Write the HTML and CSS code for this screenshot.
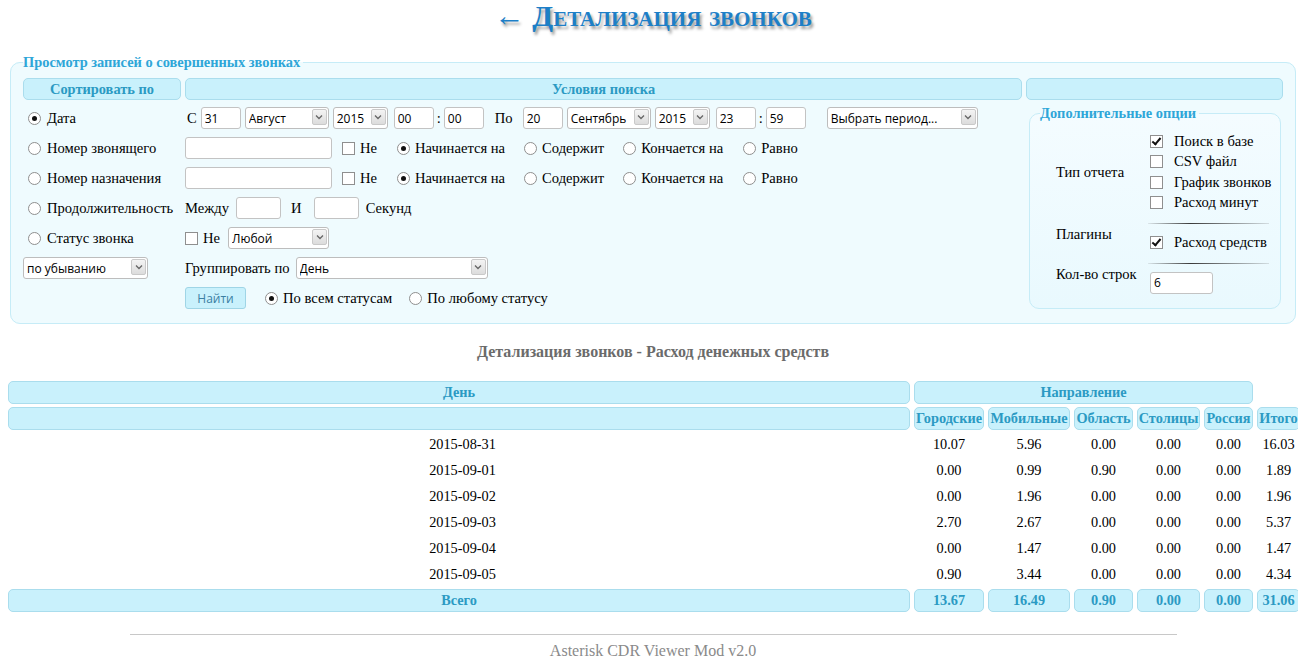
FILE: index.html
```html
<!DOCTYPE html>
<html lang="ru">
<head>
<meta charset="utf-8">
<title>Детализация звонков</title>
<link rel="stylesheet" href="styles.css">
</head>
<body>
<h1 class="title"><span class="back">&larr;</span> Детализация звонков</h1>

<fieldset class="search">
  <legend>Просмотр записей о совершенных звонках</legend>
  <div class="form-grid">
    <div class="hcell">Сортировать по</div>
    <div class="hcell">Условия поиска</div>
    <div class="hcell"></div>

    <!-- row 1 -->
    <div class="c1"><label class="opt"><input type="radio" name="sort" checked><span>Дата</span></label></div>
    <div class="c2">
      <span class="txt ml2">С</span>
      <input class="inp w40" type="text" value="31">
      <span class="sel w84"><select><option>Август</option></select><span class="arr"><svg viewBox="0 0 8 6" width="8" height="6"><path d="M1 1.5 L4 4.5 L7 1.5" fill="none" stroke="#666" stroke-width="1.3"/></svg></span></span>
      <span class="sel w55"><select><option>2015</option></select><span class="arr"><svg viewBox="0 0 8 6" width="8" height="6"><path d="M1 1.5 L4 4.5 L7 1.5" fill="none" stroke="#666" stroke-width="1.3"/></svg></span></span>
      <input class="inp w40 ml2" type="text" value="00">
      <span class="txt colon">:</span>
      <input class="inp w40" type="text" value="00">
      <span class="txt ml7">По</span>
      <input class="inp w40 ml6" type="text" value="20">
      <span class="sel w84"><select><option>Сентябрь</option></select><span class="arr"><svg viewBox="0 0 8 6" width="8" height="6"><path d="M1 1.5 L4 4.5 L7 1.5" fill="none" stroke="#666" stroke-width="1.3"/></svg></span></span>
      <span class="sel w55"><select><option>2015</option></select><span class="arr"><svg viewBox="0 0 8 6" width="8" height="6"><path d="M1 1.5 L4 4.5 L7 1.5" fill="none" stroke="#666" stroke-width="1.3"/></svg></span></span>
      <input class="inp w40 ml2" type="text" value="23">
      <span class="txt colon">:</span>
      <input class="inp w40" type="text" value="59">
      <span class="sel w151 ml17"><select><option>Выбрать период...</option></select><span class="arr"><svg viewBox="0 0 8 6" width="8" height="6"><path d="M1 1.5 L4 4.5 L7 1.5" fill="none" stroke="#666" stroke-width="1.3"/></svg></span></span>
    </div>

    <fieldset class="opts">
      <legend>Дополнительные опции</legend>
      <div class="opts-grid">
        <div class="olabel mid">Тип отчета</div>
        <div class="checks">
          <label class="opt"><input type="checkbox" checked><span>Поиск в базе</span></label>
          <label class="opt"><input type="checkbox"><span>CSV файл</span></label>
          <label class="opt"><input type="checkbox"><span>График звонков</span></label>
          <label class="opt"><input type="checkbox"><span>Расход минут</span></label>
        </div>
        <div></div><div class="sep"></div>
        <div class="olabel top">Плагины</div>
        <div class="checks">
          <label class="opt"><input type="checkbox" checked><span>Расход средств</span></label>
        </div>
        <div></div><div class="sep"></div>
        <div class="olabel top">Кол-во строк</div>
        <div class="rows"><input class="inp w62" type="text" value="6"></div>
      </div>
    </fieldset>

    <!-- row 2 -->
    <div class="c1"><label class="opt"><input type="radio" name="sort"><span>Номер звонящего</span></label></div>
    <div class="c2">
      <input class="inp w147" type="text">
      <label class="opt ml6"><input type="checkbox"><span>Не</span></label>
      <label class="opt ml16"><input type="radio" name="src" checked><span>Начинается на</span></label>
      <label class="opt ml15"><input type="radio" name="src"><span>Содержит</span></label>
      <label class="opt ml15"><input type="radio" name="src"><span>Кончается на</span></label>
      <label class="opt ml16"><input type="radio" name="src"><span>Равно</span></label>
    </div>

    <!-- row 3 -->
    <div class="c1"><label class="opt"><input type="radio" name="sort"><span>Номер назначения</span></label></div>
    <div class="c2">
      <input class="inp w147" type="text">
      <label class="opt ml6"><input type="checkbox"><span>Не</span></label>
      <label class="opt ml16"><input type="radio" name="dst" checked><span>Начинается на</span></label>
      <label class="opt ml15"><input type="radio" name="dst"><span>Содержит</span></label>
      <label class="opt ml15"><input type="radio" name="dst"><span>Кончается на</span></label>
      <label class="opt ml16"><input type="radio" name="dst"><span>Равно</span></label>
    </div>

    <!-- row 4 -->
    <div class="c1"><label class="opt"><input type="radio" name="sort"><span>Продолжительность</span></label></div>
    <div class="c2">
      <span class="txt">Между</span>
      <input class="inp w45 ml3" type="text">
      <span class="txt ml6">И</span>
      <input class="inp w45 ml8" type="text">
      <span class="txt ml3">Секунд</span>
    </div>

    <!-- row 5 -->
    <div class="c1"><label class="opt"><input type="radio" name="sort"><span>Статус звонка</span></label></div>
    <div class="c2">
      <label class="opt"><input type="checkbox"><span>Не</span></label>
      <span class="sel w101 ml4"><select><option>Любой</option></select><span class="arr"><svg viewBox="0 0 8 6" width="8" height="6"><path d="M1 1.5 L4 4.5 L7 1.5" fill="none" stroke="#666" stroke-width="1.3"/></svg></span></span>
    </div>

    <!-- row 6 -->
    <div class="c1 c1sel"><span class="sel w125"><select><option>по убыванию</option></select><span class="arr"><svg viewBox="0 0 8 6" width="8" height="6"><path d="M1 1.5 L4 4.5 L7 1.5" fill="none" stroke="#666" stroke-width="1.3"/></svg></span></span></div>
    <div class="c2">
      <span class="txt">Группировать по</span>
      <span class="sel w192 ml2"><select><option>День</option></select><span class="arr"><svg viewBox="0 0 8 6" width="8" height="6"><path d="M1 1.5 L4 4.5 L7 1.5" fill="none" stroke="#666" stroke-width="1.3"/></svg></span></span>
    </div>

    <!-- row 7 -->
    <div class="c1"></div>
    <div class="c2">
      <button class="btn" type="button">Найти</button>
      <label class="opt ml15"><input type="radio" name="st" checked><span>По всем статусам</span></label>
      <label class="opt ml13"><input type="radio" name="st"><span>По любому статусу</span></label>
    </div>
  </div>
</fieldset>

<h3 class="subtitle">Детализация звонков - Расход денежных средств</h3>

<table class="report">
  <colgroup>
    <col class="cday"><col class="cg"><col class="cm"><col class="co"><col class="cs"><col class="cr"><col class="ct">
  </colgroup>
  <thead>
    <tr>
      <th class="hd">День</th>
      <th class="hd" colspan="5">Направление</th>
      <th></th>
    </tr>
    <tr>
      <th class="hd"></th>
      <th class="hd">Городские</th>
      <th class="hd">Мобильные</th>
      <th class="hd">Область</th>
      <th class="hd">Столицы</th>
      <th class="hd">Россия</th>
      <th class="hd">Итого</th>
    </tr>
  </thead>
  <tbody>
    <tr><td>2015-08-31</td><td>10.07</td><td>5.96</td><td>0.00</td><td>0.00</td><td>0.00</td><td>16.03</td></tr>
    <tr><td>2015-09-01</td><td>0.00</td><td>0.99</td><td>0.90</td><td>0.00</td><td>0.00</td><td>1.89</td></tr>
    <tr><td>2015-09-02</td><td>0.00</td><td>1.96</td><td>0.00</td><td>0.00</td><td>0.00</td><td>1.96</td></tr>
    <tr><td>2015-09-03</td><td>2.70</td><td>2.67</td><td>0.00</td><td>0.00</td><td>0.00</td><td>5.37</td></tr>
    <tr><td>2015-09-04</td><td>0.00</td><td>1.47</td><td>0.00</td><td>0.00</td><td>0.00</td><td>1.47</td></tr>
    <tr><td>2015-09-05</td><td>0.90</td><td>3.44</td><td>0.00</td><td>0.00</td><td>0.00</td><td>4.34</td></tr>
  </tbody>
  <tfoot>
    <tr>
      <th class="hd">Всего</th>
      <th class="hd">13.67</th>
      <th class="hd">16.49</th>
      <th class="hd">0.90</th>
      <th class="hd">0.00</th>
      <th class="hd">0.00</th>
      <th class="hd">31.06</th>
    </tr>
  </tfoot>
</table>

<footer class="footer">
  <hr class="rule">
  <div class="credit">Asterisk CDR Viewer Mod v2.0</div>
</footer>
</body>
</html>
```

FILE: styles.css
```css
body {
  margin: 0 8px 8px;
  font: 14.6px "Liberation Serif", "Times New Roman", serif;
  color: #000;
  background: #fff;
}

.title {
  margin: 0;
  height: 34px;
  text-align: center;
  font: bold 30.4px/32px "Liberation Serif", "Times New Roman", serif;
  font-variant: small-caps;
  color: #1d7fc7;
  text-shadow: 2px 3px 3px #9a9a9a;
}
.title .back { font-weight: normal; }

/* search fieldset */
.search {
  margin: 20px 2px 0;
  padding: 7px 12px 12px;
  border: 1px solid #c6ecf7;
  border-radius: 10px;
  background: #effbfe;
  min-width: 0;
}
.search legend,
.opts legend {
  padding: 0 3px 0 0;
  font: bold 14.4px "Liberation Serif", serif;
  color: #2ea6d8;
}

.form-grid {
  display: grid;
  grid-template-columns: 158px 837px 1fr;
  grid-template-rows: 23px repeat(7, 26px);
  column-gap: 4px;
  row-gap: 4px;
}
.hcell {
  align-self: start;
  box-sizing: border-box;
  height: 22px;
  background: #c9f1fc;
  border: 1px solid #aadded;
  border-radius: 5px;
  font-weight: bold;
  font-size: 14.4px;
  color: #2b9ac3;
  text-align: center;
  line-height: 20px;
}
.c1, .c2 {
  display: flex;
  align-items: center;
  white-space: nowrap;
}
.c1 { padding-left: 5px; }
.c1.c1sel { padding-left: 0; }
.c2 { gap: 4px; }

.opt {
  display: inline-flex;
  align-items: center;
  gap: 5px;
  white-space: nowrap;
}
.c1 .opt { gap: 6px; }
.txt { display: inline-block; }
.colon { margin: 0 -1px; }

.ml2 { margin-left: 2px; }
.ml3 { margin-left: 3px; }
.ml4 { margin-left: 4px; }
.ml5 { margin-left: 5px; }
.ml6 { margin-left: 6px; }
.ml7 { margin-left: 7px; }
.ml8 { margin-left: 8px; }
.ml9 { margin-left: 9px; }
.ml13 { margin-left: 13px; }
.ml15 { margin-left: 15px; }
.ml16 { margin-left: 16px; }
.ml17 { margin-left: 17px; }

/* radios & checkboxes */
input[type="radio"],
input[type="checkbox"] {
  -webkit-appearance: none;
  appearance: none;
  margin: 0;
  width: 13px;
  height: 13px;
  flex: none;
  border: 1px solid #8f8f8f;
  background: #fff;
  position: relative;
  box-sizing: border-box;
}
input[type="radio"] { border-radius: 50%; }
input[type="radio"]:checked::after {
  content: "";
  position: absolute;
  left: 3px;
  top: 3px;
  width: 5px;
  height: 5px;
  border-radius: 50%;
  background: #111;
}
input[type="checkbox"]:checked::after {
  content: "";
  position: absolute;
  left: 3px;
  top: 0px;
  width: 3px;
  height: 7px;
  border: solid #111;
  border-width: 0 2px 2px 0;
  transform: rotate(40deg);
}

/* text inputs */
.inp {
  box-sizing: border-box;
  height: 22px;
  margin-top: 0;
  margin-bottom: 0;
  padding: 0 3px;
  border: 1px solid #c3c3c3;
  border-radius: 3px;
  background: #fff;
  font: 12px "Open Sans", "DejaVu Sans", sans-serif;
  color: #000;
}
.w40 { width: 40px; }
.w45 { width: 45px; }
.w62 { width: 63px; }
.w147 { width: 147px; }

/* selects */
.sel {
  position: relative;
  display: inline-block;
  height: 22px;
  flex: none;
}
.sel select {
  -webkit-appearance: none;
  appearance: none;
  box-sizing: border-box;
  width: 100%;
  height: 22px;
  margin: 0;
  padding: 0 20px 0 3px;
  border: 1px solid #bdbdbd;
  border-radius: 3px;
  background: #fff;
  font: 12px "Open Sans", "DejaVu Sans", sans-serif;
  color: #000;
}
.sel .arr {
  position: absolute;
  right: 2px;
  top: 2px;
  width: 15px;
  height: 16px;
  box-sizing: border-box;
  border: 1px solid #c9c9c9;
  border-radius: 2px;
  background: linear-gradient(#f4f4f4, #dcdcdc);
  display: flex;
  align-items: center;
  justify-content: center;
}
.sel .arr svg { display: block; }
.w55 { width: 55px; }
.w84 { width: 84px; }
.w101 { width: 101px; }
.w125 { width: 125px; }
.w151 { width: 151px; }
.w192 { width: 192px; }

.btn {
  box-sizing: border-box;
  width: 61px;
  height: 22px;
  margin: 0;
  padding: 0;
  border: 1px solid #9fd5e6;
  border-radius: 3px;
  background: #c9f1fc;
  font: 12px "Open Sans", "DejaVu Sans", sans-serif;
  color: #3b7fa3;
}

/* options fieldset */
.opts {
  grid-column: 3;
  grid-row: 2 / span 7;
  margin: 0 2px 2px 3px;
  padding: 0 0 0 10px;
  border: 1px solid #c6ecf7;
  border-radius: 10px;
  background: linear-gradient(#f4fcff, #e9f9fe);
  min-width: 0;
}
.opts-grid {
  display: grid;
  grid-template-columns: 110px 1fr;
  padding-top: 9px;
}
.olabel { padding-left: 16px; white-space: nowrap; }
.olabel.mid { align-self: center; }
.olabel.top { margin-top: -6px; }
.checks {
  display: flex;
  flex-direction: column;
}
.checks .opt {
  height: 20.5px;
  gap: 11px;
}
.sep {
  height: 1px;
  margin: 10px 11px 8px -2px;
  background: linear-gradient(90deg, rgba(60,60,60,0.1), #3a3a3a 35%, rgba(60,60,60,0.15));
}

/* report */
.subtitle {
  margin: 18px 0 0;
  text-align: center;
  font: bold 16px/20px "Liberation Serif", serif;
  color: #6b6b6b;
}
.report {
  table-layout: fixed;
  width: 1300px;
  margin: 16px 0 0 -4px;
  border-collapse: separate;
  border-spacing: 4px 3px;
}
.cday { width: 902px; }
.cg { width: 70px; }
.cm { width: 82px; }
.co { width: 59px; }
.cs { width: 63px; }
.cr { width: 49px; }
.ct { width: 43px; }
.report th, .report td {
  height: 23px;
  padding: 0;
  text-align: center;
  vertical-align: middle;
  font-size: 14.3px;
  white-space: nowrap;
}
.report th.hd {
  box-sizing: border-box;
  background: #c9f1fc;
  border: 1px solid #aadded;
  border-radius: 5px;
  font-weight: bold;
  color: #2b9ac3;
}
.report td { color: #000; font-weight: normal; }
.report tbody td:first-child { padding-left: 7px; }

.footer { margin-top: 19px; }
.rule {
  width: 1047px;
  margin: 0 auto;
  border: 0;
  border-top: 1px solid #c8c8c8;
  height: 0;
}
.credit {
  margin-top: 7px;
  text-align: center;
  font: 16px "Liberation Serif", serif;
  color: #8a8a8a;
}
```
